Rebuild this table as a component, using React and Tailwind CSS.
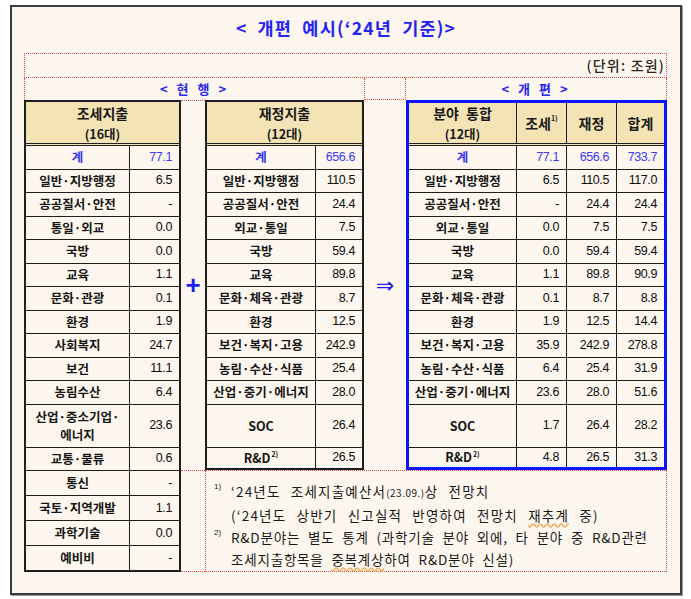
const KR = "font-['Noto_Sans_CJK_KR','Noto_Sans',sans-serif]"
const NUM = "font-['Liberation_Sans',Arial,sans-serif]"
const DOT = 'border-dotted border-[#f04848]'
const LINE = 'border-[#1e1e1e]'

const left = [
  ['계', '77.1', 'blue'],
  ['일반·지방행정', '6.5'],
  ['공공질서·안전', '-'],
  ['통일·외교', '0.0'],
  ['국방', '0.0'],
  ['교육', '1.1'],
  ['문화·관광', '0.1'],
  ['환경', '1.9'],
  ['사회복지', '24.7'],
  ['보건', '11.1'],
  ['농림수산', '6.4'],
  [<>산업·중소기업·<br />에너지</>, '23.6', 'tall'],
  ['교통·물류', '0.6'],
  ['통신', '-', 'low'],
  ['국토·지역개발', '1.1', 'low'],
  ['과학기술', '0.0', 'low'],
  ['예비비', '-', 'last'],
]

const mid = [
  ['계', '656.6', 'blue'],
  ['일반·지방행정', '110.5'],
  ['공공질서·안전', '24.4'],
  ['외교·통일', '7.5'],
  ['국방', '59.4'],
  ['교육', '89.8'],
  ['문화·체육·관광', '8.7'],
  ['환경', '12.5'],
  ['보건·복지·고용', '242.9'],
  ['농림·수산·식품', '25.4'],
  ['산업·중기·에너지', '28.0'],
  ['SOC', '26.4', 'tall'],
  [<>R&amp;D<sup className="text-[7px] ml-[1px]">2)</sup></>, '26.5', 'last'],
]

const right = [
  ['계', ['77.1', '656.6', '733.7'], 'blue'],
  ['일반·지방행정', ['6.5', '110.5', '117.0']],
  ['공공질서·안전', ['-', '24.4', '24.4']],
  ['외교·통일', ['0.0', '7.5', '7.5']],
  ['국방', ['0.0', '59.4', '59.4']],
  ['교육', ['1.1', '89.8', '90.9']],
  ['문화·체육·관광', ['0.1', '8.7', '8.8']],
  ['환경', ['1.9', '12.5', '14.4']],
  ['보건·복지·고용', ['35.9', '242.9', '278.8']],
  ['농림·수산·식품', ['6.4', '25.4', '31.9']],
  ['산업·중기·에너지', ['23.6', '28.0', '51.6']],
  ['SOC', ['1.7', '26.4', '28.2'], 'tall'],
  [<>R&amp;D<sup className="text-[7px] ml-[1px]">2)</sup></>, ['4.8', '26.5', '31.3'], 'last'],
]

function rowHeight(kind) {
  if (kind === 'tall') return 'h-[43px]'
  if (kind === 'low') return 'h-[25px]'
  if (kind === 'last') return 'flex-1'
  return 'h-[23.5px]'
}

function Rows({ rows, labelW, valW }) {
  return rows.map(([label, vals, kind], i) => {
    const blue = kind === 'blue'
    const list = Array.isArray(vals) ? vals : [vals]
    return (
      <div key={i} className={`flex ${rowHeight(kind)} ${kind === 'last' ? '' : 'border-b ' + LINE}`}>
        <div className={`${labelW} shrink-0 border-r ${LINE} flex items-center justify-center text-center leading-[18px] ${KR} text-[12.5px] font-semibold ${blue ? 'text-[#3a34ee] font-bold' : 'text-[#161616]'}`}>
          {label}
        </div>
        {list.map((v, j) => (
          <div key={j} className={`${j === list.length - 1 ? 'flex-1' : valW + ' border-r ' + LINE} flex items-center justify-end pr-[7px] ${NUM} text-[12.5px] tracking-[-0.4px] ${blue ? 'text-[#3b3bf5]' : 'text-[#0c0c0c]'}`}>
            {v}
          </div>
        ))}
      </div>
    )
  })
}

function SimpleTable({ title, sub, rows, w, h, labelW }) {
  return (
    <div className={`${w} ${h} shrink-0 border-2 ${LINE} flex flex-col`}>
      <div className={`h-[44px] shrink-0 bg-[#f3e3b5] border-b-[3px] border-double ${LINE} flex flex-col items-center justify-center ${KR} font-bold text-[#1a1a1a]`}>
        <div className="text-[14px] leading-[21px]">{title}</div>
        <div className="text-[12.5px] leading-[19px]">{sub}</div>
      </div>
      <Rows rows={rows} labelW={labelW} />
    </div>
  )
}

function Plan() {
  const head = `flex items-center justify-center ${KR} font-bold text-[14px] text-[#1a1a1a]`
  return (
    <div className="w-[261px] h-[370px] shrink-0 border-[3px] border-[#0a14ff] flex flex-col">
      <div className={`h-[43px] shrink-0 flex bg-[#f3e3b5] border-b-[3px] border-double ${LINE}`}>
        <div className={`w-[108px] shrink-0 border-r ${LINE} flex flex-col items-center justify-center ${KR} font-bold text-[#1a1a1a]`}>
          <div className="text-[14px] leading-[21px] [word-spacing:4px]">분야 통합</div>
          <div className="text-[12.5px] leading-[19px]">(12대)</div>
        </div>
        <div className={`w-[50px] shrink-0 border-r ${LINE} ${head}`}>
          조세<sup className="text-[7px] -mt-[4px]">1)</sup>
        </div>
        <div className={`w-[50px] shrink-0 border-r ${LINE} ${head}`}>재정</div>
        <div className={`flex-1 ${head}`}>합계</div>
      </div>
      <Rows rows={right} labelW="w-[108px]" valW="w-[50px]" />
    </div>
  )
}

function Note({ mark, children, wide }) {
  return (
    <div className="flex">
      <div className={`w-[17px] shrink-0 ${NUM} text-[8px] leading-[14px] text-[#222]`}>{mark}</div>
      <div className={`${KR} text-[13.5px] leading-[22px] text-[#1a1a1a] whitespace-nowrap ${wide ? 'tracking-[1.2px] [word-spacing:6px]' : 'tracking-[0.8px] [word-spacing:4px]'}`}>{children}</div>
    </div>
  )
}

export default function App() {
  return (
    <div className="bg-white w-[691px] h-[599px] pt-[5px]">
      <div className="ml-[10px] w-[672px] h-[590px] border-2 border-[#3c3c3c] bg-[#fdf6ee] shadow-[1px_1px_0_#9a9a9a]">
        <div className={`h-[46px] pt-[9px] text-center leading-[24px] ${KR} font-bold text-[17.5px] text-[#2323f2] tracking-[1.2px] [word-spacing:5px]`}>
          &lt; 개편 예시(‘24년 기준)&gt;
        </div>

        <div className="ml-[12px] w-[643px]">
          <div className={`h-[25px] border ${DOT} flex items-center justify-end pr-[1px] ${KR} font-medium text-[14px] tracking-[1.2px] text-[#2a2520]`}>
            (단위: 조원)
          </div>

          <div className="h-[22px] flex">
            <div className={`w-[340px] border-l ${DOT} flex items-center justify-center ${KR} font-bold text-[13px] text-[#2727f0] tracking-[3px]`}>
              &lt; 현 행 &gt;
            </div>
            <div className={`w-[42px] border-l border-r border-b ${DOT}`} />
            <div className={`flex-1 border-r ${DOT} flex items-center justify-center ${KR} font-bold text-[13px] text-[#2727f0] tracking-[3px]`}>
              &lt; 개 편 &gt;
            </div>
          </div>

          <div className="flex items-start">
            <SimpleTable title="조세지출" sub="(16대)" rows={left} w="w-[157px]" h="h-[472px]" labelW="w-[104px]" />

            <div className="w-[486px] flex flex-col">
              <div className="h-[370px] flex">
                <div className={`w-[24px] border-t ${DOT} flex items-center justify-center ${NUM} font-bold text-[26px] text-[#1c1cf0]`}>
                  +
                </div>
                <SimpleTable title="재정지출" sub="(12대)" rows={mid} w="w-[159px]" h="h-[370px]" labelW="w-[109px]" />
                <div className="w-[42px] flex items-center justify-center font-['DejaVu_Sans',sans-serif] text-[22px] text-[#2222f0]">
                  ⇒
                </div>
                <Plan />
              </div>

              <div className="h-[102px] flex">
                <div className={`w-[24px] border-t border-b ${DOT}`} />
                <div className={`flex-1 border ${DOT} pl-[8px] pt-[9px]`}>
                  <Note mark="1)" wide>
                    ‘24년도 조세지출예산서<span className="text-[10px] tracking-[0.5px] [word-spacing:0]">(23.09.)</span>상 전망치
                    <br />
                    (‘24년도 상반기 신고실적 반영하여 전망치{' '}
                    <span className="underline decoration-wavy decoration-[#f0a040] underline-offset-2">재추계</span> 중)
                  </Note>
                  <Note mark="2)">
                    R&amp;D분야는 별도 통계 (과학기술 분야 외에, 타 분야 중 R&amp;D관련
                    <br />
                    조세지출항목을{' '}
                    <span className="underline decoration-wavy decoration-[#f0a040] underline-offset-2">중복계상</span>하여 R&amp;D분야 신설)
                  </Note>
                </div>
              </div>
            </div>
          </div>
        </div>
      </div>
    </div>
  )
}
